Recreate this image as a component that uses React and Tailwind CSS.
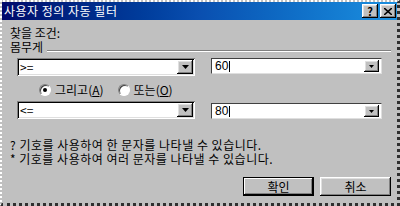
import { useState } from "react";

const font = { fontFamily: '"Noto Sans CJK KR", "Noto Sans", sans-serif' };

const sunken =
  "shadow-[inset_1px_1px_0_#808080,inset_-1px_-1px_0_#ffffff,inset_2px_2px_0_#000000,inset_-2px_-2px_0_#dfdfdf]";
const raised =
  "shadow-[inset_-1px_-1px_0_#000000,inset_1px_1px_0_#ffffff,inset_-2px_-2px_0_#808080,inset_2px_2px_0_#dfdfdf]";

const Arrow = () => (
  <svg width="7" height="4" viewBox="0 0 7 4">
    <path d="M0 0h7L3.5 4z" fill="#000" />
  </svg>
);

const OperatorBox = ({ value }) => (
  <div className={`flex items-center w-[178px] h-[18px] bg-white pl-[3px] pr-[2px] ${sunken}`}>
    <span className="flex-1 text-[12px] leading-none text-black">{value}</span>
    <div className={`flex items-center justify-center w-[16px] h-[14px] bg-[#c0c0c0] ${raised}`}>
      <Arrow />
    </div>
  </div>
);

const ValueBox = ({ value }) => (
  <div className="flex items-center w-[171px] h-[16px] bg-white pl-[3px] pr-[2px] border-t border-l border-[#404040] border-b border-r border-b-[#dfdfdf] border-r-[#dfdfdf]">
    <span className="flex-1 text-[12px] leading-none text-black" style={{ fontFamily: '"Liberation Sans", sans-serif' }}>
      {value}
      <span className="inline-block w-px h-[11px] bg-black align-middle ml-px" />
    </span>
    <div className={`flex items-center justify-center w-[15px] h-[12px] bg-[#c0c0c0] ${raised}`}>
      <svg width="5" height="3" viewBox="0 0 5 3">
        <path d="M0 0h5L2.5 3z" fill="#000" />
      </svg>
    </div>
  </div>
);

const Radio = ({ checked, label, hot }) => (
  <label className="flex items-center gap-[4px]">
    <span className="relative w-[12px] h-[12px] rounded-full bg-white border border-t-[#808080] border-l-[#808080] border-b-[#ffffff] border-r-[#ffffff] shadow-[inset_1px_1px_0_#404040]">
      {checked && <span className="absolute left-[3px] top-[3px] w-[4px] h-[4px] rounded-full bg-black" />}
    </span>
    <span className="text-[12px] leading-[14px] text-black">
      {label}(<span className="underline">{hot}</span>)
    </span>
  </label>
);

const Button = ({ children, isDefault }) => (
  <button
    className={`w-[71px] h-[19px] text-[12px] leading-none text-black bg-[#c0c0c0] ${
      isDefault ? "border border-black shadow-[inset_-1px_-1px_0_#000000,inset_1px_1px_0_#ffffff,inset_-2px_-2px_0_#808080]" : raised
    }`}
  >
    {children}
  </button>
);

export default function App() {
  const [first] = useState({ op: ">=", value: "60" });
  const [second] = useState({ op: "<=", value: "80" });

  return (
    <div
      className="w-[400px] h-[206px] flex flex-col bg-[#c0c0c0] border-t-2 border-l-2 border-t-white border-l-white border-r-[3px] border-b-[3px] border-dotted border-r-[#303030] border-b-[#303030] text-black overflow-hidden"
      style={font}
    >
      {/* title bar */}
      <div className="flex items-center h-[18px] pl-[2px] pr-[1px] bg-gradient-to-r from-[#00086b] via-[#0a4fb0] to-[#1c90e0]">
        <span className="flex-1 text-[12px] leading-none text-white tracking-[0.5px]">사용자 정의 자동 필터</span>
        <div className="flex gap-[2px]">
          <div className={`flex items-center justify-center w-[16px] h-[14px] bg-[#c0c0c0] text-[11px] font-bold leading-none ${raised}`}>?</div>
          <div className={`flex items-center justify-center w-[16px] h-[14px] bg-[#c0c0c0] ${raised}`}>
            <svg width="8" height="7" viewBox="0 0 8 7">
              <path d="M0 0L8 7M8 0L0 7" stroke="#000" strokeWidth="1.6" />
            </svg>
          </div>
        </div>
      </div>

      <div className="flex flex-col pl-[8px] pr-[6px]">
        <p className="mt-[6px] text-[12px] leading-[14px]">찾을 조건:</p>
        <div className="flex items-center gap-[4px]">
          <span className="text-[12px] leading-[14px]">몸무게</span>
          <div className="flex-1 mt-[8px] border-t border-b border-t-[#808080] border-b-white" />
        </div>

        <div className="flex items-start gap-[16px] mt-[4px] pl-[7px]">
          <OperatorBox value={first.op} />
          <ValueBox value={first.value} />
        </div>

        <div className="flex items-center gap-[14px] mt-[7px] pl-[29px]">
          <Radio checked label="그리고" hot="A" />
          <Radio label="또는" hot="O" />
        </div>

        <div className="flex items-start gap-[16px] mt-[4px] pl-[7px]">
          <OperatorBox value={second.op} />
          <div className="mt-[2px]">
            <ValueBox value={second.value} />
          </div>
        </div>

        <div className="mt-[19px] text-[12px] leading-[14px] tracking-[0.5px]">
          <p>? 기호를 사용하여 한 문자를 나타낼 수 있습니다.</p>
          <p>* 기호를 사용하여 여러 문자를 나타낼 수 있습니다.</p>
        </div>

        <div className="flex justify-end gap-[6px] mt-[11px]">
          <Button isDefault>확인</Button>
          <Button>취소</Button>
        </div>
      </div>
    </div>
  );
}
